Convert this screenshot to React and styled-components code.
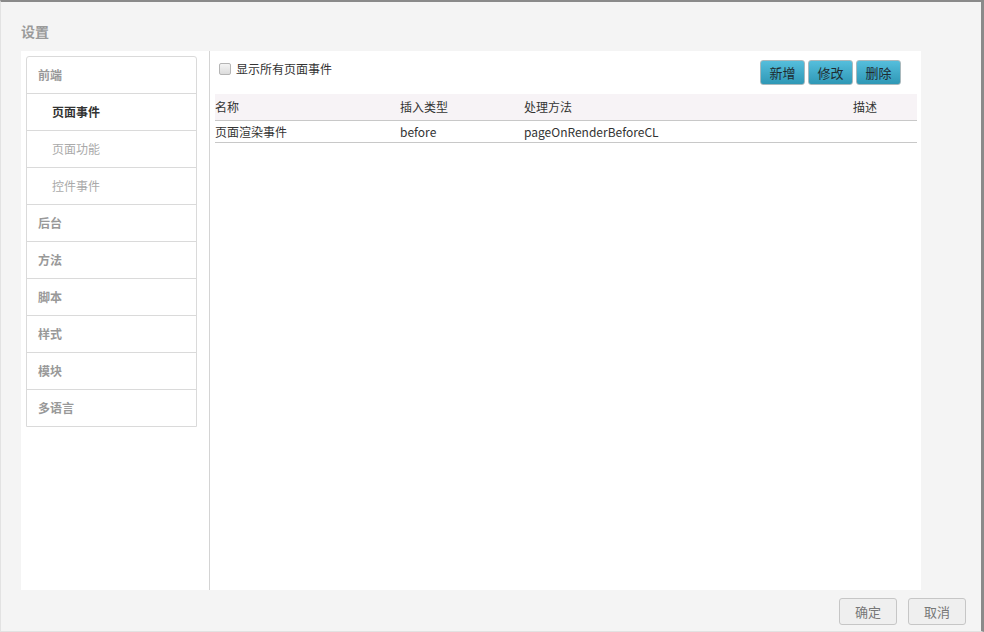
import React from "react";
import styled, { createGlobalStyle } from "styled-components";

const Global = createGlobalStyle`
  html, body { margin: 0; padding: 0; }
  body { font-family: "Noto Sans CJK SC", "Liberation Sans", sans-serif; font-size: 12px; }
  * { box-sizing: border-box; }
`;

const Frame = styled.div`
  width: 984px;
  height: 632px;
  background: #f4f4f4;
  border-top: 2px solid #8a8a8a;
  border-right: 3px solid #8a8a8a;
  border-left: 1px solid #e2e2e2;
  border-bottom: 1px solid #e2e2e2;
  display: flex;
  flex-direction: column;
  padding: 0 0 0 20px;
`;

const Title = styled.div`
  height: 49px;
  padding-top: 19px;
  font-size: 14px;
  font-weight: bold;
  color: #9a9a9a;
  line-height: 20px;
`;

const Panel = styled.div`
  width: 900px;
  height: 539px;
  background: #fff;
  display: flex;
`;

const Side = styled.div`
  width: 189px;
  border-right: 1px solid #d4d4d4;
  padding: 5px 0 0 5px;
`;

const Menu = styled.div`
  width: 171px;
  border: 1px solid #dadada;
  border-radius: 3px 3px 0 0;
`;

const MenuItem = styled.div`
  height: ${(p) => (p.$first ? "36px" : "37px")};
  line-height: 36px;
  border-top: ${(p) => (p.$first ? "none" : "1px solid #dadada")};
  padding-left: ${(p) => (p.$sub ? "25px" : "11px")};
  color: ${(p) => (p.$active ? "#333" : p.$sub ? "#aaa" : "#999")};
  font-weight: ${(p) => (p.$sub && !p.$active ? "normal" : "bold")};
  font-size: 12px;
`;

const Content = styled.div`
  flex: 1;
  padding: 8px 4px 0 5px;
  display: flex;
  flex-direction: column;
`;

const Toolbar = styled.div`
  height: 35px;
  display: flex;
  align-items: flex-start;
  justify-content: space-between;
  padding-right: 16px;
`;

const CheckLabel = styled.label`
  display: flex;
  align-items: center;
  gap: 5px;
  padding: 3px 0 0 4px;
  color: #333;
  font-size: 12px;
  line-height: 14px;
`;

const Box = styled.span`
  width: 12px;
  height: 12px;
  border: 1px solid #b5b5b5;
  border-radius: 2px;
  background: linear-gradient(#f4f4f4, #dcdcdc);
`;

const Buttons = styled.div`
  display: flex;
  gap: 3px;
  padding-top: 1px;
`;

const TealButton = styled.button`
  width: 45px;
  height: 25px;
  border: 1px solid #a9b9bd;
  border-radius: 3px;
  background: linear-gradient(#55bedc, #2f98b6);
  color: #1f2b30;
  font-family: inherit;
  font-size: 13px;
  padding: 0;
  cursor: pointer;
`;

const Table = styled.table`
  width: 702px;
  border-collapse: collapse;
  font-size: 12px;
  color: #333;
`;

const Th = styled.th`
  text-align: left;
  font-weight: normal;
  height: 26px;
  padding: 0;
  background: #f7f3f6;
  border-bottom: 1px solid #c8c8c8;
  width: ${(p) => p.$w || "auto"};
`;

const Td = styled.td`
  height: 22px;
  padding: 0;
  border-bottom: 1px solid #c8c8c8;
`;

const Footer = styled.div`
  height: 40px;
  display: flex;
  justify-content: flex-end;
  align-items: center;
  gap: 11px;
  padding: 2px 15px 0 0;
`;

const GrayButton = styled.button`
  width: 58px;
  height: 27px;
  border: 1px solid #c6c6c6;
  border-radius: 3px;
  background: #efefef;
  color: #777;
  font-family: inherit;
  font-size: 13px;
  padding: 0;
`;

const menu = [
  { t: "前端" },
  { t: "页面事件", sub: true, active: true },
  { t: "页面功能", sub: true },
  { t: "控件事件", sub: true },
  { t: "后台" },
  { t: "方法" },
  { t: "脚本" },
  { t: "样式" },
  { t: "模块" },
  { t: "多语言" },
];

export default function App() {
  return (
    <>
      <Global />
      <Frame>
        <Title>设置</Title>
        <Panel>
          <Side>
            <Menu>
              {menu.map((m, i) => (
                <MenuItem key={m.t} $first={i === 0} $sub={m.sub} $active={m.active}>
                  {m.t}
                </MenuItem>
              ))}
            </Menu>
          </Side>
          <Content>
            <Toolbar>
              <CheckLabel>
                <Box />
                显示所有页面事件
              </CheckLabel>
              <Buttons>
                <TealButton>新增</TealButton>
                <TealButton>修改</TealButton>
                <TealButton>删除</TealButton>
              </Buttons>
            </Toolbar>
            <Table>
              <thead>
                <tr>
                  <Th $w="185px">名称</Th>
                  <Th $w="124px">插入类型</Th>
                  <Th $w="329px">处理方法</Th>
                  <Th>描述</Th>
                </tr>
              </thead>
              <tbody>
                <tr>
                  <Td>页面渲染事件</Td>
                  <Td>before</Td>
                  <Td>pageOnRenderBeforeCL</Td>
                  <Td></Td>
                </tr>
              </tbody>
            </Table>
          </Content>
        </Panel>
        <Footer>
          <GrayButton>确定</GrayButton>
          <GrayButton>取消</GrayButton>
        </Footer>
      </Frame>
    </>
  );
}
